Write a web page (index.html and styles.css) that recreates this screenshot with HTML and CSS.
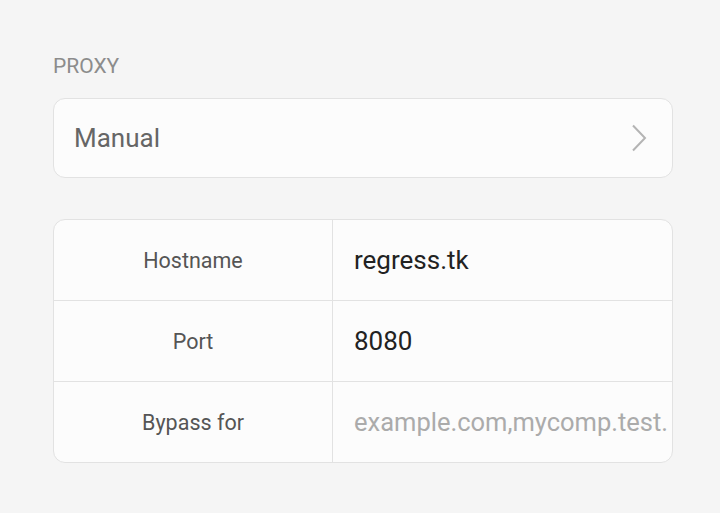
FILE: index.html
```html
<!DOCTYPE html>
<html>
<head>
<meta charset="utf-8">
<link rel="stylesheet" href="styles.css">
</head>
<body>
<div class="page">
  <div class="section-title">PROXY</div>
  <div class="card select">
    <span class="select-value">Manual</span>
    <svg class="chevron" width="16" height="28" viewBox="0 0 16 28"><path d="M2 1.5 L14 14 L2 26.5" fill="none" stroke="#b4b4b4" stroke-width="2"/></svg>
  </div>
  <div class="card table">
    <div class="row">
      <div class="label">Hostname</div>
      <div class="value">regress.tk</div>
    </div>
    <div class="row">
      <div class="label">Port</div>
      <div class="value">8080</div>
    </div>
    <div class="row">
      <div class="label">Bypass for</div>
      <div class="value placeholder">example.com,mycomp.test.</div>
    </div>
  </div>
</div>
</body>
</html>
```
FILE: styles.css
```css
html, body {
  margin: 0;
  padding: 0;
  background: #f5f5f5;
  font-family: Roboto, "Noto Sans", sans-serif;
}
.page {
  padding: 54px 47px 0 53px;
  display: flex;
  flex-direction: column;
}
.section-title {
  font-size: 21px;
  color: #8c8c8c;
  line-height: 25px;
  height: 25px;
  margin-bottom: 19px;
}
.card {
  background: #fcfcfc;
  border: 1px solid #e2e2e2;
  border-radius: 12px;
  box-sizing: border-box;
}
.select {
  height: 80px;
  display: flex;
  align-items: center;
  justify-content: space-between;
  padding: 0 25px 0 20px;
  margin-bottom: 41px;
}
.select-value {
  font-size: 26px;
  color: #666;
}
.chevron {
  display: block;
}
.table {
  display: flex;
  flex-direction: column;
  overflow: hidden;
}
.row {
  display: grid;
  grid-template-columns: 279px 1fr;
  height: 80px;
  box-sizing: border-box;
}
.row + .row {
  border-top: 1px solid #e2e2e2;
  height: 81px;
}
.label {
  border-right: 1px solid #e2e2e2;
  display: flex;
  align-items: center;
  justify-content: center;
  font-size: 21.5px;
  color: #555;
}
.value {
  display: flex;
  align-items: center;
  padding-left: 21px;
  font-size: 26px;
  color: #222;
  white-space: nowrap;
  overflow: hidden;
}
.placeholder {
  color: #ababab;
  font-size: 25.5px;
}
```
